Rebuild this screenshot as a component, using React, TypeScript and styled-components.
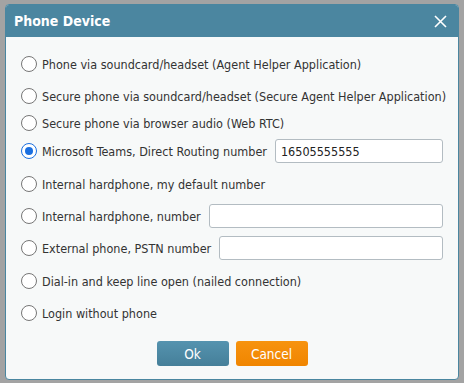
import React, { useState } from 'react'
import styled, { createGlobalStyle } from 'styled-components'

const GlobalStyle = createGlobalStyle`
  html, body {
    margin: 0;
    padding: 0;
    background: #a3a3a3;
  }
  body {
    font-family: 'DejaVu Sans Condensed', 'DejaVu Sans', sans-serif;
  }
`

const Dialog = styled.div`
  margin: 4px 5px;
  width: 454px;
  height: 376px;
  box-sizing: border-box;
  border: 1px solid #4a86a0;
  border-radius: 4px;
  background: #f7f9f9;
  display: flex;
  flex-direction: column;
  overflow: hidden;
`

const Header = styled.div`
  height: 32px;
  background: #4b86a0;
  display: flex;
  align-items: center;
  justify-content: space-between;
  padding: 0 10px 0 8px;
  color: #ffffff;
`

const Title = styled.div`
  font-size: 14px;
  font-weight: bold;
`

const CloseButton = styled.button`
  border: none;
  background: transparent;
  padding: 0;
  width: 16px;
  height: 16px;
  display: flex;
  align-items: center;
  justify-content: center;
  cursor: pointer;
`

const Body = styled.div`
  flex: 1;
  display: flex;
  flex-direction: column;
  padding: 10px 15px 13px 15px;
`

const Row = styled.label<{ $h: number }>`
  height: ${(p) => p.$h}px;
  display: flex;
  align-items: center;
  font-size: 12.5px;
  color: #333333;
  white-space: nowrap;
  cursor: pointer;
`

const Radio = styled.span<{ $on: boolean }>`
  width: 14px;
  height: 14px;
  flex: none;
  border-radius: 50%;
  border: 1px solid ${(p) => (p.$on ? '#1a6fe0' : '#767676')};
  background: #ffffff;
  margin-right: 5px;
  display: flex;
  align-items: center;
  justify-content: center;
  &::after {
    content: '';
    width: 8px;
    height: 8px;
    border-radius: 50%;
    background: ${(p) => (p.$on ? '#1a6fe0' : 'transparent')};
  }
`

const NumberInput = styled.input`
  margin-left: 8px;
  flex: 1;
  min-width: 0;
  height: 24px;
  box-sizing: border-box;
  border: 1px solid #b3bcc2;
  border-radius: 3px;
  background: #ffffff;
  padding: 0 5px;
  font-family: inherit;
  font-size: 12.5px;
  color: #222222;
  outline: none;
`

const Buttons = styled.div`
  margin-top: auto;
  display: flex;
  justify-content: center;
  gap: 7px;
`

const Button = styled.button<{ $kind: 'ok' | 'cancel' }>`
  width: 72px;
  height: 25px;
  border: none;
  border-radius: 3px;
  color: #ffffff;
  font-family: inherit;
  font-size: 13.5px;
  font-weight: normal;
  cursor: pointer;
  background: ${(p) =>
    p.$kind === 'ok'
      ? 'linear-gradient(#5593af, #457f99)'
      : 'linear-gradient(#f7930f, #f08500)'};
`

const options = [
  { label: 'Phone via soundcard/headset (Agent Helper Application)', h: 34 },
  { label: 'Secure phone via soundcard/headset (Secure Agent Helper Application)', h: 30 },
  { label: 'Secure phone via browser audio (Web RTC)', h: 24 },
  { label: 'Microsoft Teams, Direct Routing number', h: 32, input: '16505555555' },
  { label: 'Internal hardphone, my default number', h: 34 },
  { label: 'Internal hardphone, number', h: 30, input: '' },
  { label: 'External phone, PSTN number', h: 34, input: '' },
  { label: 'Dial-in and keep line open (nailed connection)', h: 32 },
  { label: 'Login without phone', h: 32 },
]

export default function App() {
  const [selected, setSelected] = useState(3)
  return (
    <>
      <GlobalStyle />
      <Dialog>
        <Header>
          <Title>Phone Device</Title>
          <CloseButton aria-label="Close">
            <svg width="13" height="13" viewBox="0 0 13 13">
              <path d="M1 1L12 12M12 1L1 12" stroke="#ffffff" strokeWidth="1.6" />
            </svg>
          </CloseButton>
        </Header>
        <Body>
          {options.map((o, i) => (
            <Row key={o.label} $h={o.h} onClick={() => setSelected(i)}>
              <Radio $on={selected === i} />
              {o.label}
              {o.input !== undefined && <NumberInput defaultValue={o.input} />}
            </Row>
          ))}
          <Buttons>
            <Button $kind="ok">Ok</Button>
            <Button $kind="cancel">Cancel</Button>
          </Buttons>
        </Body>
      </Dialog>
    </>
  )
}
